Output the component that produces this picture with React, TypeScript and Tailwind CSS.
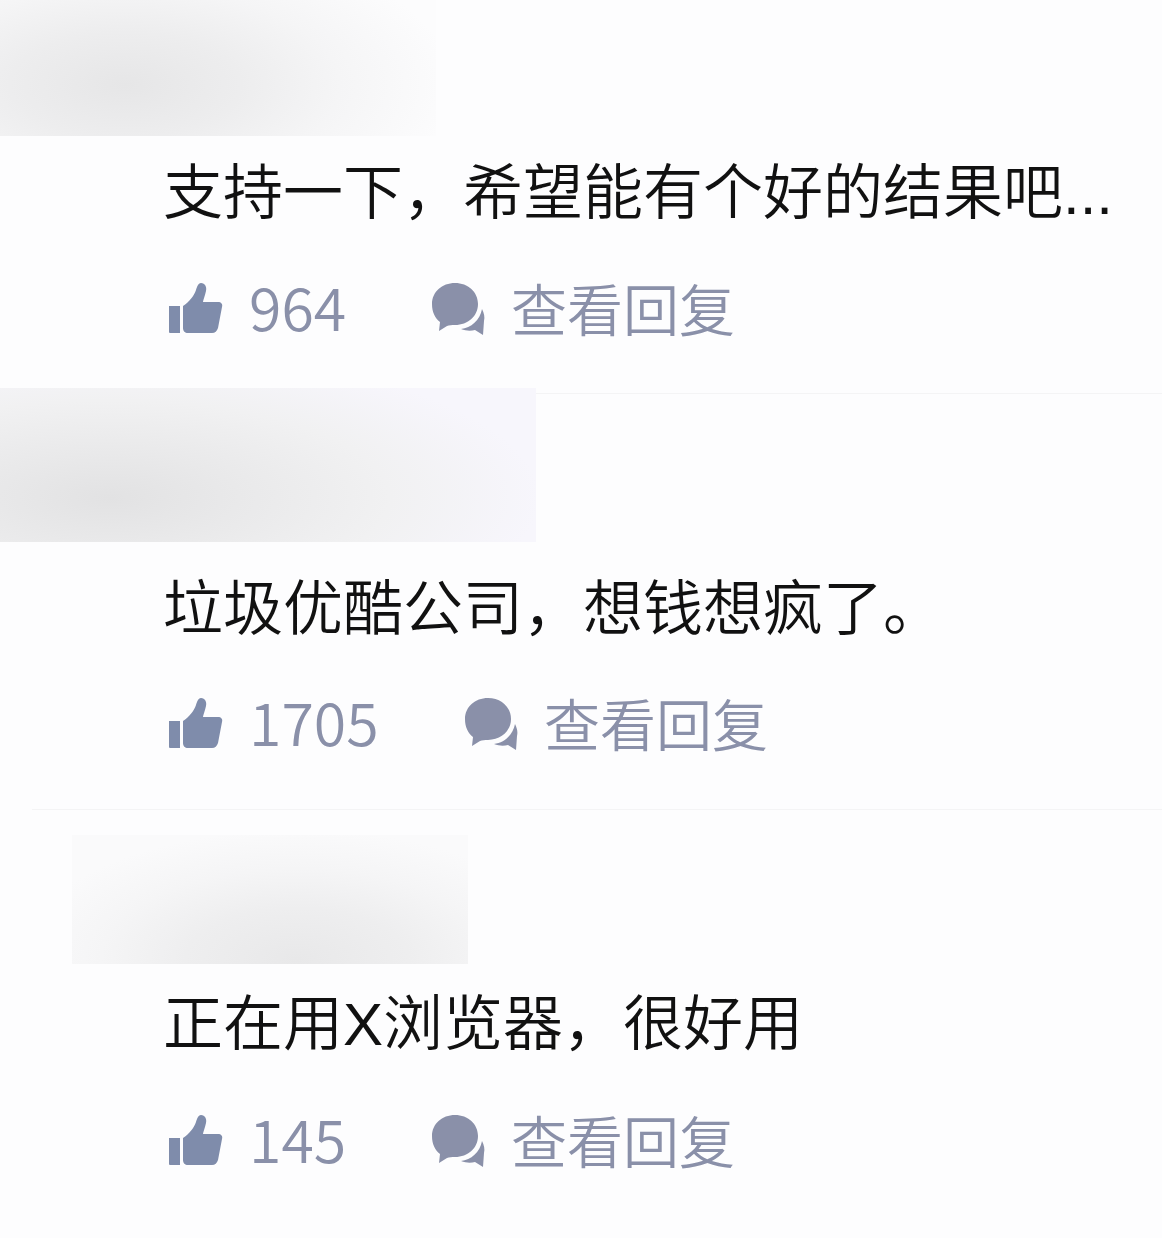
const ThumbIcon = () => (
  <svg width="54" height="54" viewBox="0 0 54 54" className="shrink-0">
    <path fill="#7f8cab" d="M0 24h11v27H1q-1 0-1-1z" />
    <path
      fill="#7f8cab"
      d="M14 24c6-4 11-10 13-16 1-3 2-7 5-7 4 0 6 4 5 8-1 5-3 9-3 11h15c3 0 5 2 4 5l-4 21c-1 3-3 5-6 5H19c-3 0-5-2-5-5z"
    />
  </svg>
);

const ChatIcon = () => (
  <svg width="54" height="54" viewBox="0 0 54 54" className="shrink-0">
    <path
      fill="#8a90a9"
      d="M24 1c13 0 23 9 23 21 0 12-10 21-23 21-3 0-6 0-8 1l-8 5 1-9C4 36 1 30 1 22 1 10 11 1 24 1z"
    />
    <path
      fill="#8a90a9"
      d="M51 27c2 4 3 8 2 12l-1 14-8-5c-4 1-9 1-14-1 10-1 19-9 21-20z"
    />
  </svg>
);

interface Comment {
  text: string;
  likes: string;
  likesWidth: string;
  blur: string;
  rowClass: string;
  actionClass: string;
}

const comments: Comment[] = [
  {
    text: '支持一下，希望能有个好的结果吧...',
    likes: '964',
    likesWidth: 'w-[182px]',
    blur: 'w-[436px] h-[136px] bg-[radial-gradient(ellipse_330px_150px_at_125px_85px,#e6e6e7_0%,#ededee_35%,#f5f5f6_65%,#fcfcfd_100%)]',
    rowClass: 'pt-[28px]',
    actionClass: 'mt-[55px]',
  },
  {
    text: '垃圾优酷公司，想钱想疯了。',
    likes: '1705',
    likesWidth: 'w-[215px]',
    blur: 'w-[536px] h-[154px] bg-[radial-gradient(ellipse_430px_150px_at_110px_110px,#e2e2e3_0%,#e9e9ea_30%,#f1f1f2_65%,#f7f6fc_100%)]',
    rowClass: 'pt-[38px]',
    actionClass: 'mt-[54px]',
  },
  {
    text: '正在用X浏览器，很好用',
    likes: '145',
    likesWidth: 'w-[182px]',
    blur: 'ml-[72px] w-[396px] h-[129px] bg-[radial-gradient(ellipse_280px_130px_at_225px_125px,#e8e8e9_0%,#eeeeef_40%,#f5f5f6_70%,#fafafb_100%)]',
    rowClass: 'pt-[31px]',
    actionClass: 'mt-[56px]',
  },
];

const App = () => {
  return (
    <div className="w-[1162px] h-[1238px] overflow-hidden bg-[#fdfdfe] font-['Liberation_Sans','Noto_Sans_CJK_SC',sans-serif]">
      {comments.map((c, i) => (
        <section
          key={c.likes}
          className={
            i === 0
              ? 'h-[394px] border-b border-[#f4f4f5]'
              : i === 1
                ? 'h-[422px] border-b border-[#f4f4f5] relative'
                : 'pt-[25px]'
          }
        >
          {i === 1 && <div className="absolute left-0 bottom-[-1px] w-[32px] h-px bg-[#fdfdfe]" />}
          <div className={`${c.blur} ${i === 1 ? 'mt-[-6px]' : ''}`} />
          <div className={`pl-[163px] ${c.rowClass}`}>
            <p className="text-[60px] leading-[60px] font-[350] text-[#111111] whitespace-nowrap">
              {c.text}
            </p>
            <div
              className={`${c.actionClass} flex items-center h-[60px] pl-[6px] text-[#8a90a9] font-['Noto_Sans_CJK_SC',sans-serif]`}
            >
              <ThumbIcon />
              <span
                className={`ml-[26px] ${c.likesWidth} pb-[6px] text-[59px] leading-[60px] font-[350]`}
              >
                {c.likes}
              </span>
              <ChatIcon />
              <span className="ml-[26px] pb-[4px] text-[56px] leading-[60px] font-[350]">
                查看回复
              </span>
            </div>
          </div>
        </section>
      ))}
    </div>
  );
};

export default App;
